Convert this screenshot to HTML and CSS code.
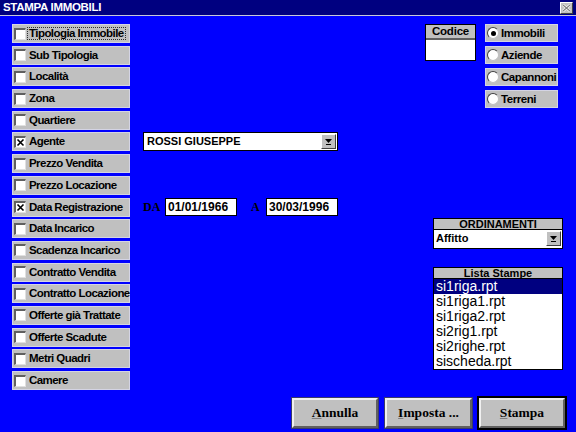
FILE: index.html
```html
<!DOCTYPE html>
<html>
<head>
<meta charset="utf-8">
<link rel="stylesheet" href="styles.css">
</head>
<body>
<div class="window">
  <div class="titlebar">
    <span class="title">STAMPA IMMOBILI</span>
    <span class="close"><svg width="9" height="8" viewBox="0 0 9 8"><path d="M1 1L8 7M8 1L1 7" stroke="#fff" stroke-width="2.4"/><path d="M1 1L8 7M8 1L1 7" stroke="#808080" stroke-width="1.2"/></svg></span>
  </div>
  <div class="main">
    <label class="chk"><span class="box"></span><span class="lbl focus">Tipologia Immobile</span></label>
    <label class="chk"><span class="box"></span><span class="lbl">Sub Tipologia</span></label>
    <label class="chk"><span class="box"></span><span class="lbl">Località</span></label>
    <label class="chk"><span class="box"></span><span class="lbl">Zona</span></label>
    <label class="chk"><span class="box"></span><span class="lbl">Quartiere</span></label>
    <label class="chk"><span class="box"><svg width="9" height="9" viewBox="0 0 9 9"><path d="M1.5 1.5L7.5 7.5M7.5 1.5L1.5 7.5" stroke="#000" stroke-width="1.6"/></svg></span><span class="lbl">Agente</span></label>
    <label class="chk"><span class="box"></span><span class="lbl">Prezzo Vendita</span></label>
    <label class="chk"><span class="box"></span><span class="lbl">Prezzo Locazione</span></label>
    <label class="chk"><span class="box"><svg width="9" height="9" viewBox="0 0 9 9"><path d="M1.5 1.5L7.5 7.5M7.5 1.5L1.5 7.5" stroke="#000" stroke-width="1.6"/></svg></span><span class="lbl">Data Registrazione</span></label>
    <label class="chk"><span class="box"></span><span class="lbl">Data Incarico</span></label>
    <label class="chk"><span class="box"></span><span class="lbl">Scadenza Incarico</span></label>
    <label class="chk"><span class="box"></span><span class="lbl">Contratto Vendita</span></label>
    <label class="chk"><span class="box"></span><span class="lbl">Contratto Locazione</span></label>
    <label class="chk"><span class="box"></span><span class="lbl">Offerte già Trattate</span></label>
    <label class="chk"><span class="box"></span><span class="lbl">Offerte Scadute</span></label>
    <label class="chk"><span class="box"></span><span class="lbl">Metri Quadri</span></label>
    <label class="chk"><span class="box"></span><span class="lbl">Camere</span></label>

    <div class="combo agente">
      <span class="combo-text">ROSSI GIUSEPPE</span>
      <span class="drop"><svg width="9" height="8" viewBox="0 0 9 8"><path d="M1 1H8L4.5 5Z" fill="#000"/><rect x="2" y="6" width="5" height="1" fill="#000"/></svg></span>
    </div>

    <div class="dates">
      <span class="dlabel">DA</span>
      <span class="field">01/01/1966</span>
      <span class="dlabel a">A</span>
      <span class="field">30/03/1996</span>
    </div>

    <div class="right">
      <div class="top">
        <div class="codice">
          <div class="codice-head">Codice</div>
          <div class="codice-body"></div>
        </div>
        <div class="radios">
          <label class="radio"><span class="circle on"></span>Immobili</label>
          <label class="radio"><span class="circle"></span>Aziende</label>
          <label class="radio"><span class="circle"></span>Capannoni</label>
          <label class="radio"><span class="circle"></span>Terreni</label>
        </div>
      </div>

      <div class="panel ord">
        <div class="panel-head">ORDINAMENTI</div>
        <div class="combo small">
          <span class="combo-text">Affitto</span>
          <span class="drop"><svg width="9" height="8" viewBox="0 0 9 8"><path d="M1 1H8L4.5 5Z" fill="#000"/><rect x="2" y="6" width="5" height="1" fill="#000"/></svg></span>
        </div>
      </div>

      <div class="panel lista">
        <div class="panel-head">Lista Stampe</div>
        <ul class="items">
          <li class="sel">si1riga.rpt</li>
          <li>si1riga1.rpt</li>
          <li>si1riga2.rpt</li>
          <li>si2rig1.rpt</li>
          <li>si2righe.rpt</li>
          <li>sischeda.rpt</li>
        </ul>
      </div>
    </div>
  </div>

  <div class="buttons">
    <button class="btn"><u>A</u>nnulla</button>
    <button class="btn"><u>I</u>mposta ...</button>
    <button class="btn default"><u>S</u>tampa</button>
  </div>
</div>
</body>
</html>
```

FILE: styles.css
```css
html, body {
  margin: 0;
  padding: 0;
}
body {
  width: 576px;
  height: 432px;
  overflow: hidden;
  background: #0000ff;
  font-family: "Liberation Sans", Arial, sans-serif;
}
.window {
  width: 576px;
  height: 432px;
  background: #0000ff;
  display: flex;
  flex-direction: column;
}
.titlebar {
  height: 15px;
  background: #000080;
  border-bottom: 1px solid #c8c8d8;
  display: flex;
  align-items: center;
  justify-content: space-between;
  padding: 0 3px 0 3px;
}
.title {
  color: #fff;
  font-weight: bold;
  font-size: 11.5px;
  line-height: 15px;
  letter-spacing: -0.3px;
}
.close {
  width: 13px;
  height: 12px;
  box-sizing: border-box;
  background: #c0c0c0;
  border-top: 1px solid #fff;
  border-left: 1px solid #fff;
  border-right: 1px solid #404040;
  border-bottom: 1px solid #404040;
  display: flex;
  align-items: center;
  justify-content: center;
  margin-top: 1px;
}

.main {
  display: grid;
  grid-template-columns: 118px 13px 195px 1fr;
  grid-template-rows: repeat(17, 19px);
  row-gap: 2.69px;
  padding: 8px 0 0 12px;
}
.chk {
  grid-column: 1;
  box-sizing: border-box;
  height: 19px;
  background: #c0c0c0;
  border: 1px solid #d4d4e4;
  display: flex;
  align-items: center;
  padding-left: 1px;
  font-weight: bold;
  font-size: 11.5px;
  letter-spacing: -0.55px;
  color: #000;
  white-space: nowrap;
}
.box {
  width: 12px;
  height: 12px;
  box-sizing: border-box;
  background: #fff;
  border-top: 2px solid #606060;
  border-left: 2px solid #606060;
  border-right: 1px solid #e0e0e0;
  border-bottom: 1px solid #e0e0e0;
  display: flex;
  align-items: center;
  justify-content: center;
  flex: none;
}
.lbl {
  margin-left: 1px;
  padding: 0 1px;
  line-height: 11px;
  border: 1px solid transparent;
}
.lbl.focus {
  border: 1px dotted #303030;
}

.combo {
  box-sizing: border-box;
  background: #fff;
  border: 1px solid #000;
  display: flex;
  align-items: center;
  justify-content: space-between;
  font-weight: bold;
  font-size: 11px;
}
.combo.agente {
  grid-column: 3;
  grid-row: 6;
  height: 19px;
  padding-left: 3px;
}
.combo-text {
  line-height: 15px;
}
.drop {
  width: 15px;
  height: 15px;
  box-sizing: border-box;
  background: #c0c0c0;
  border-top: 1px solid #fff;
  border-left: 1px solid #fff;
  border-right: 1px solid #404040;
  border-bottom: 1px solid #404040;
  display: flex;
  align-items: center;
  justify-content: center;
  margin-right: 1px;
}

.dates {
  grid-column: 3;
  grid-row: 9;
  display: flex;
  align-items: center;
}
.dlabel {
  font-family: "Liberation Serif", "Times New Roman", serif;
  font-weight: bold;
  font-size: 12px;
  color: #000;
  width: 22px;
}
.dlabel.a {
  width: 15px;
  margin-left: 14px;
}
.field {
  width: 72px;
  height: 18px;
  box-sizing: border-box;
  background: #fff;
  border: 1px solid #000;
  font-weight: bold;
  font-size: 12px;
  line-height: 16px;
  padding-left: 2px;
  color: #000;
}

.right {
  grid-column: 4;
  grid-row: 1 / 18;
  display: flex;
  flex-direction: column;
}
.top {
  display: flex;
  margin-left: 87px;
  gap: 9px;
}
.codice {
  width: 51px;
  height: 37px;
  box-sizing: border-box;
  border: 1px solid #000;
  display: flex;
  flex-direction: column;
}
.codice-head {
  background: #c0c0c0;
  height: 13px;
  border-bottom: 2px solid #606060;
  font-weight: bold;
  font-size: 11.5px;
  letter-spacing: -0.2px;
  line-height: 13px;
  text-align: center;
}
.codice-body {
  flex: 1;
  background: #fff;
}
.radios {
  display: flex;
  flex-direction: column;
  gap: 3.9px;
}
.radio {
  width: 73px;
  height: 18px;
  box-sizing: border-box;
  background: #c0c0c0;
  border: 1px solid #d4d4e4;
  display: flex;
  align-items: center;
  font-weight: bold;
  font-size: 11.5px;
  letter-spacing: -0.45px;
  padding-left: 1px;
  gap: 2px;
}
.circle {
  width: 12px;
  height: 12px;
  box-sizing: border-box;
  border-radius: 50%;
  background: #fff;
  border: 1px solid #404040;
  border-right-color: #c0c0c0;
  border-bottom-color: #c0c0c0;
  flex: none;
  display: flex;
  align-items: center;
  justify-content: center;
}
.circle.on::after {
  content: "";
  width: 5px;
  height: 5px;
  border-radius: 50%;
  background: #000;
}

.panel {
  margin-left: 95px;
  width: 130px;
  box-sizing: border-box;
  border: 1px solid #000;
}
.panel-head {
  background: #c0c0c0;
  font-weight: bold;
  font-size: 11px;
  text-align: center;
  color: #000;
  border-bottom: 1px solid #000;
  height: 10px;
  line-height: 10px;
}
.ord {
  margin-top: 110px;
}
.combo.small {
  border: none;
  height: 18px;
  padding-left: 2px;
}
.lista {
  margin-top: 18px;
}
.items {
  list-style: none;
  margin: 0;
  padding: 0;
  background: #fff;
}
.items li {
  height: 15px;
  line-height: 15px;
  font-size: 14px;
  padding-left: 2px;
  color: #000;
}
.items li.sel {
  background: #000080;
  color: #fff;
}

.buttons {
  display: flex;
  justify-content: flex-end;
  gap: 7px;
  padding-right: 11px;
  margin-top: 8px;
}
.btn {
  width: 86px;
  height: 30px;
  box-sizing: border-box;
  background: #c0c0c0;
  border-top: 2px solid #f0f0f0;
  border-left: 2px solid #f0f0f0;
  border-right: 2px solid #606060;
  border-bottom: 2px solid #606060;
  outline: 1px solid #3a3a6a;
  font-family: "Liberation Serif", "Times New Roman", serif;
  font-weight: bold;
  font-size: 13.5px;
  color: #000;
  padding: 0;
}
.btn:nth-child(2) {
  width: 87px;
}
.btn.default {
  outline: 2px solid #000;
}
.btn u {
  text-decoration-color: #808080;
}
```
